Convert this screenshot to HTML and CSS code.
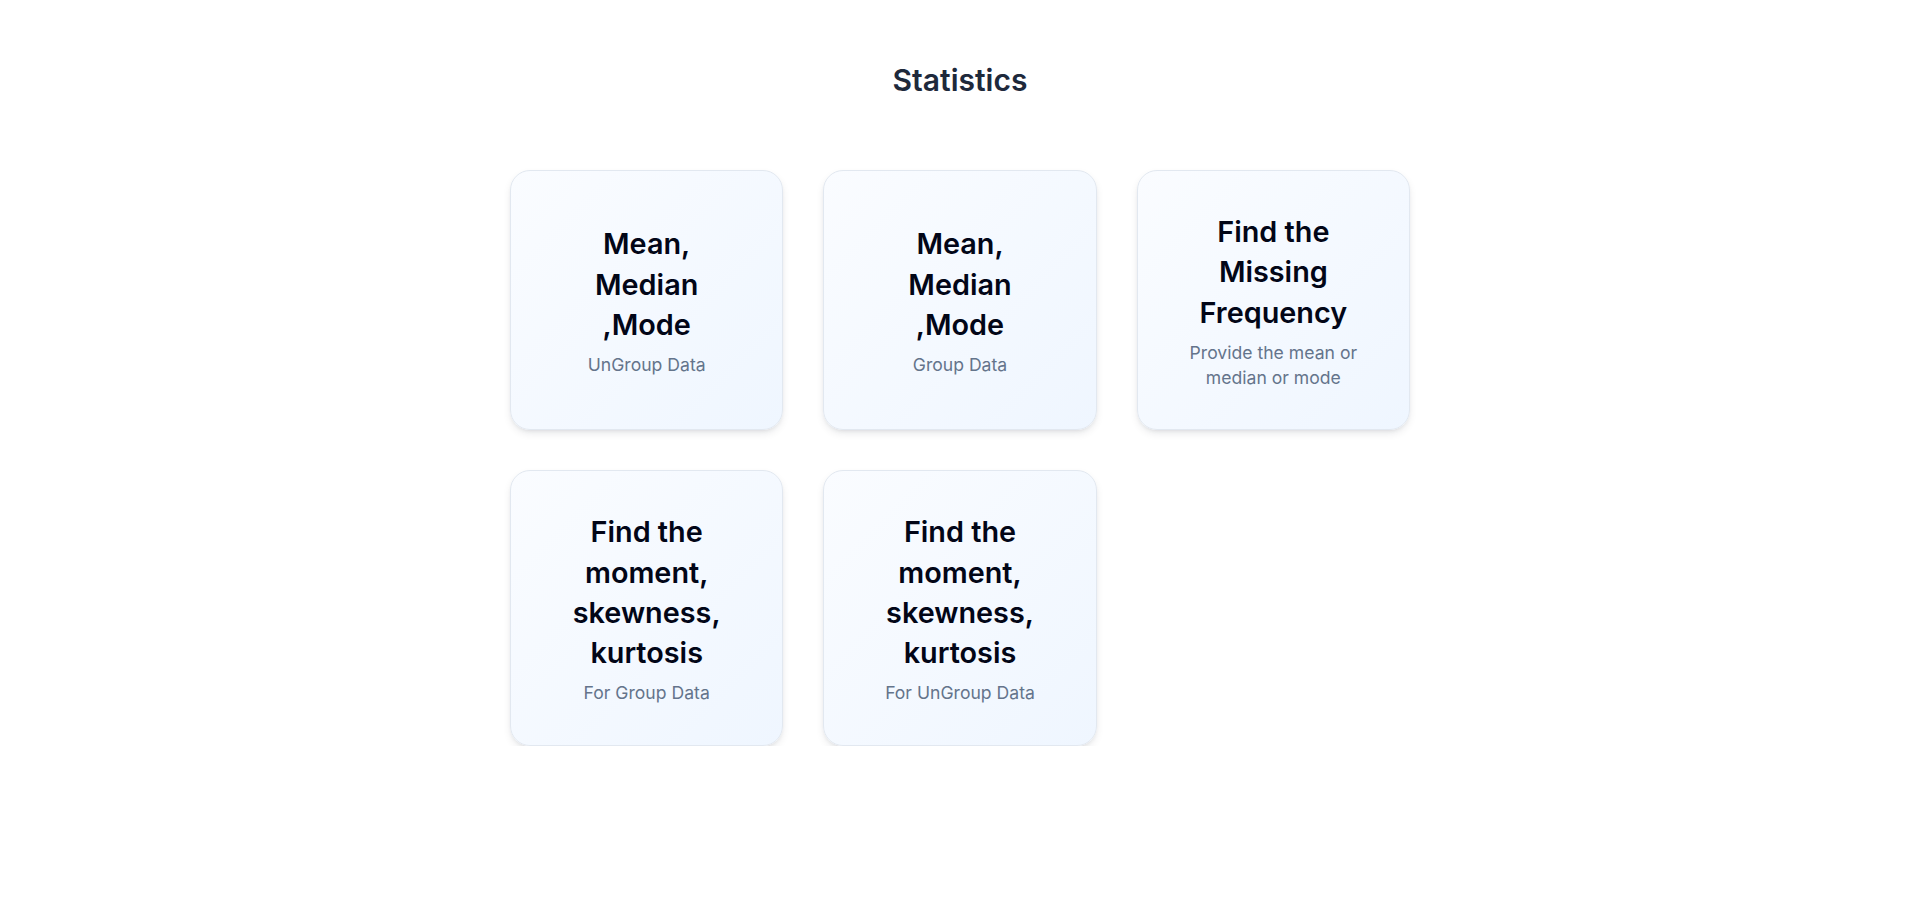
FILE: index.html
```html
<!DOCTYPE html>
<html lang="en">
<head>
<meta charset="utf-8">
<title>Statistics</title>
<link rel="stylesheet" href="styles.css">
</head>
<body>
<main class="page">
  <h1 class="page-title">Statistics</h1>
  <section class="grid">
    <a class="card" href="#">
      <h2 class="card-title">Mean, Median ,Mode</h2>
      <p class="card-sub">UnGroup Data</p>
    </a>
    <a class="card" href="#">
      <h2 class="card-title">Mean, Median ,Mode</h2>
      <p class="card-sub">Group Data</p>
    </a>
    <a class="card" href="#">
      <h2 class="card-title">Find the Missing Frequency</h2>
      <p class="card-sub">Provide the mean or median or mode</p>
    </a>
    <a class="card" href="#">
      <h2 class="card-title">Find the moment, skewness, kurtosis</h2>
      <p class="card-sub">For Group Data</p>
    </a>
    <a class="card" href="#">
      <h2 class="card-title">Find the moment, skewness, kurtosis</h2>
      <p class="card-sub">For UnGroup Data</p>
    </a>
  </section>
</main>
</body>
</html>
```

FILE: styles.css
```css
* { box-sizing: border-box; }
html, body { margin: 0; padding: 0; background: #ffffff; }
body { font-family: Inter, "Noto Sans", Arial, sans-serif; line-height: 1.4; }

.page {
  padding-top: 62px;
  display: flex;
  flex-direction: column;
  align-items: center;
}

.page-title {
  margin: 0 0 72px;
  font-size: 30px;
  line-height: 36px;
  font-weight: 600;
  color: #1e293b;
}

.grid {
  width: 900px;
  display: grid;
  grid-template-columns: repeat(3, 1fr);
  gap: 40px;
}

.card {
  display: flex;
  flex-direction: column;
  align-items: center;
  justify-content: center;
  text-align: center;
  padding: 41px 48px 39px;
  border: 1px solid #e2e8f0;
  border-radius: 20px;
  background: linear-gradient(135deg, #fafcff 0%, #eff6ff 100%);
  box-shadow: 0 4px 10px -2px rgba(15, 23, 42, 0.12), 0 2px 4px -2px rgba(15, 23, 42, 0.1);
  text-decoration: none;
}

.card-title {
  margin: 0;
  font-size: 28.8px;
  line-height: 1.4;
  font-weight: 600;
  color: #020617;
}

.card-sub {
  margin: 8px 0 0;
  font-size: 17.6px;
  line-height: 1.4;
  color: #64748b;
}
```
